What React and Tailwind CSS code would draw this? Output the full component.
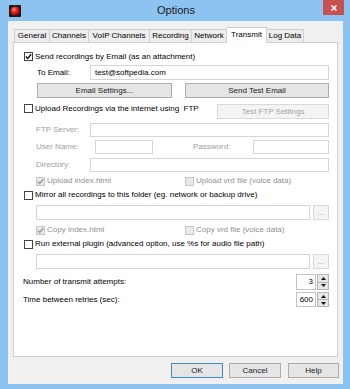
import React from "react";

function Check({ checked, disabled }) {
  return (
    <span
      className={`w-[9px] h-[9px] border flex items-center justify-center shrink-0 ${
        disabled ? "border-[#c6c6c6] bg-[#e9e9e9]" : "border-[#444] bg-white"
      }`}
    >
      {checked && (
        <svg width="7" height="7" viewBox="0 0 7 7">
          <path
            d="M0.8 3.6 L2.7 5.4 L6.2 1.2"
            fill="none"
            stroke={disabled ? "#9c9c9c" : "#111"}
            strokeWidth="1.4"
          />
        </svg>
      )}
    </span>
  );
}

function Btn({ children, className = "", disabled, def }) {
  return (
    <div
      className={`h-[15px] border flex items-center justify-center shrink-0 ${
        disabled
          ? "bg-[#f4f4f4] border-[#d9d9d9] text-[#a3a3a3]"
          : def
          ? "bg-[#e5e5e5] border-[#3c8ad8] text-[#1a1a1a]"
          : "bg-[#e5e5e5] border-[#adadad] text-[#1a1a1a]"
      } ${className}`}
    >
      {children}
    </div>
  );
}

function Field({ className = "", children }) {
  return (
    <div
      className={`h-full border border-[#d5d5d5] bg-white flex items-center ${className}`}
    >
      {children}
    </div>
  );
}

function Spinner({ value }) {
  return (
    <div className="ml-auto flex h-full">
      <div className="w-[20px] h-full border border-[#c3c3c3] bg-white flex items-center justify-end pr-[2px]">
        {value}
      </div>
      <div className="w-[12px] flex flex-col ml-[1px]">
        <div className="flex-1 bg-[#e6e6e6] border border-[#b5b5b5] flex items-center justify-center">
          <svg width="5" height="3" viewBox="0 0 5 3">
            <path d="M0 3 L2.5 0 L5 3 Z" fill="#111" />
          </svg>
        </div>
        <div className="flex-1 bg-[#e6e6e6] border border-[#b5b5b5] border-t-0 flex items-center justify-center">
          <svg width="5" height="3" viewBox="0 0 5 3">
            <path d="M0 0 L2.5 3 L5 0 Z" fill="#111" />
          </svg>
        </div>
      </div>
    </div>
  );
}

const tabs = [
  { name: "General", w: "w-[36px]" },
  { name: "Channels", w: "w-[40px]" },
  { name: "VoIP Channels", w: "w-[62px]" },
  { name: "Recording", w: "w-[43px]" },
  { name: "Network", w: "w-[36px]" },
  { name: "Transmit", w: "w-[41px]", active: true },
  { name: "Log Data", w: "w-[38px]" },
];

export default function App() {
  return (
    <div className="w-[350px] h-[389px] bg-[#8cc3f1] flex flex-col [font-family:'Liberation_Sans',Arial,sans-serif] text-[8px] text-black leading-none select-none">
      {/* Title bar */}
      <div className="h-[21px] flex items-start shrink-0">
        <svg className="mt-[5px] ml-[9px]" width="12" height="12" viewBox="0 0 12 12">
          <defs>
            <radialGradient id="ball" cx="0.4" cy="0.35" r="0.65">
              <stop offset="0" stopColor="#ffb0b0" />
              <stop offset="0.35" stopColor="#ff2a2a" />
              <stop offset="1" stopColor="#a00000" />
            </radialGradient>
          </defs>
          <rect x="0" y="0" width="12" height="12" rx="1" fill="#1b1b1b" />
          <circle cx="6" cy="6" r="4.6" fill="url(#ball)" />
        </svg>
        <div className="flex-1 pl-[8px] pt-[5px] text-center text-[11px] text-[#1a1a1a]">
          Options
        </div>
        <div className="w-[21px] h-[15px] mr-[6px] bg-[#c75050] flex items-center justify-center">
          <svg width="6" height="6" viewBox="0 0 6 6">
            <path d="M0.5 0.5 L5.5 5.5 M5.5 0.5 L0.5 5.5" stroke="#fff" strokeWidth="1.5" />
          </svg>
        </div>
      </div>

      {/* Client area */}
      <div className="ml-[8px] w-[335px] h-[363px] bg-[#f0f0f0] flex flex-col">
        <div className="px-[5px] pt-[6px]">
          {/* Tabs */}
          <div className="flex items-end h-[15px] pl-[1px]">
            {tabs.map((t, i) => (
              <div
                key={t.name}
                className={`${t.w} ${i > 0 ? "-ml-[1px]" : ""} border-l border-t border-r border-[#d0d0d0] flex items-center justify-center ${
                  t.active
                    ? "h-[16px] -mb-[1px] bg-white relative z-10 pb-[1px]"
                    : "h-[13px] bg-[#ededed]"
                }`}
              >
                {t.name}
              </div>
            ))}
          </div>

          {/* Panel */}
          <div className="h-[315px] border border-[#d0d0d0] bg-white flex flex-col pl-[10px] pr-[8px]">
            <div className="mt-[8px] h-[11px] flex items-center gap-[2px]">
              <Check checked />
              <span>Send recordings by Email (as an attachment)</span>
            </div>

            <div className="mt-[3px] h-[15px] flex items-center">
              <div className="w-[66px] pl-[13px] shrink-0">To Email:</div>
              <Field className="flex-1 pl-[4px] border-[#abadb3]">test@softpedia.com</Field>
            </div>

            <div className="mt-[3px] h-[15px] flex">
              <Btn className="ml-[13px] w-[135px]">Email Settings...</Btn>
              <Btn className="ml-[13px] w-[144px]">Send Test Email</Btn>
            </div>

            <div className="mt-[6px] h-[15px] flex items-start">
              <div className="h-[9px] flex items-center gap-[2px]">
                <Check />
                <span className="whitespace-pre">Upload Recordings via the internet using  FTP</span>
              </div>
              <Btn disabled className="ml-auto w-[112px]">Test FTP Settings</Btn>
            </div>

            <div className="mt-[4px] h-[14px] flex items-center text-[#a0a0a0]">
              <div className="w-[66px] pl-[12px] shrink-0">FTP Server:</div>
              <Field className="flex-1" />
            </div>

            <div className="mt-[3px] h-[14px] flex items-center text-[#a0a0a0]">
              <div className="w-[71px] pl-[12px] shrink-0">User Name:</div>
              <Field className="w-[58px]" />
              <div className="w-[100px] pl-[40px] shrink-0">Password:</div>
              <Field className="flex-1" />
            </div>

            <div className="mt-[4px] h-[14px] flex items-center text-[#a0a0a0]">
              <div className="w-[66px] pl-[12px] shrink-0">Directory:</div>
              <Field className="flex-1" />
            </div>

            <div className="mt-[4px] h-[10px] flex items-center text-[#8f8f8f]">
              <div className="ml-[12px] w-[149px] flex items-center gap-[2px]">
                <Check checked disabled />
                <span>Upload index.html</span>
              </div>
              <div className="flex items-center gap-[2px]">
                <Check disabled />
                <span>Upload vrd file (voice data)</span>
              </div>
            </div>

            <div className="mt-[4px] h-[10px] flex items-center gap-[2px]">
              <Check />
              <span>Mirror all recordings to this folder (eg. network or backup drive)</span>
            </div>

            <div className="mt-[5px] h-[15px] flex items-center">
              <Field className="ml-[12px] w-[274px]" />
              <Btn disabled className="ml-[3px] w-[16px]">...</Btn>
            </div>

            <div className="mt-[5px] h-[10px] flex items-center text-[#8f8f8f]">
              <div className="ml-[12px] w-[149px] flex items-center gap-[2px]">
                <Check checked disabled />
                <span>Copy index.html</span>
              </div>
              <div className="flex items-center gap-[2px]">
                <Check disabled />
                <span>Copy vrd file (voice data)</span>
              </div>
            </div>

            <div className="mt-[4px] h-[10px] flex items-center gap-[2px]">
              <Check />
              <span>Run external plugin (advanced option, use %s for audio file path)</span>
            </div>

            <div className="mt-[5px] h-[15px] flex items-center">
              <Field className="ml-[12px] w-[274px]" />
              <Btn disabled className="ml-[3px] w-[16px]">...</Btn>
            </div>

            <div className="mt-[5px] h-[16px] flex items-center">
              <span className="-ml-[1px]">Number of transmit attempts:</span>
              <Spinner value="3" />
            </div>

            <div className="mt-[2px] h-[15px] flex items-center">
              <span className="-ml-[1px]">Time between retries (sec):</span>
              <Spinner value="600" />
            </div>
          </div>
        </div>

        {/* Dialog buttons */}
        <div className="mt-[6px] flex justify-end pr-[4px]">
          <Btn def className="w-[52px]">OK</Btn>
          <Btn className="ml-[6px] w-[52px]">Cancel</Btn>
          <Btn className="ml-[7px] w-[51px]">Help</Btn>
        </div>
      </div>
    </div>
  );
}
